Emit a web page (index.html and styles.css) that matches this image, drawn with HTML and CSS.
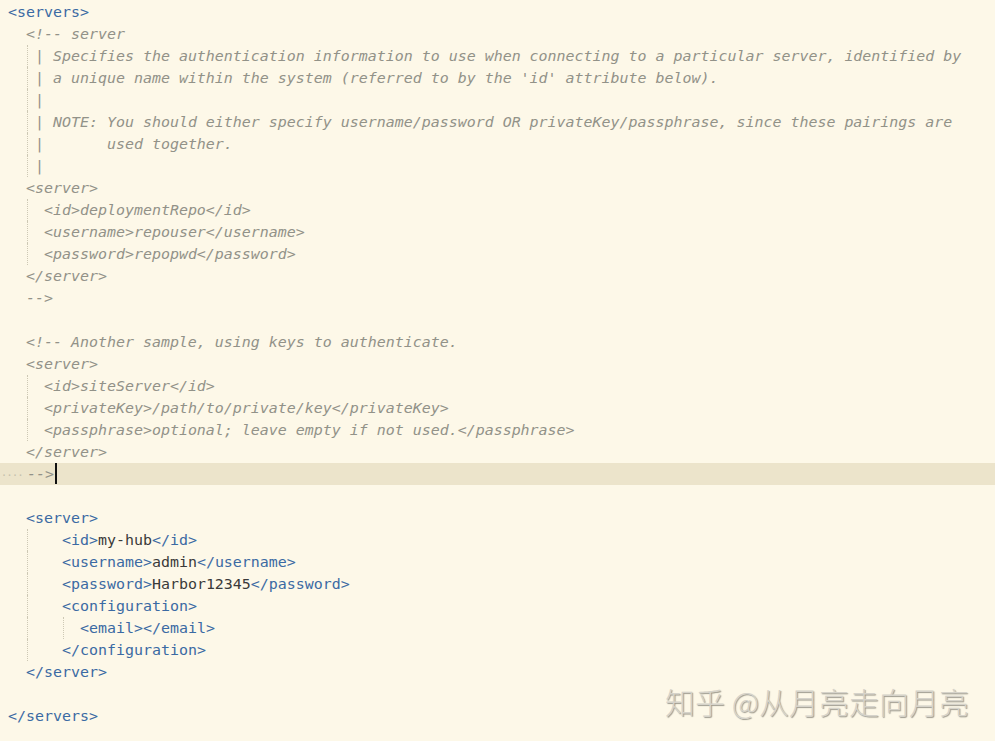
FILE: index.html
```html
<!DOCTYPE html>
<html lang="zh">
<head>
<meta charset="utf-8">
<title>settings.xml</title>
<link rel="stylesheet" href="styles.css">
</head>
<body>
<div class="editor">
<div class="code">
<div class="ln"><span class="t">&lt;servers&gt;</span></div>
<div class="ln c">  &lt;!-- server</div>
<div class="ln c">  <span class="gd"></span> | Specifies the authentication information to use when connecting to a particular server, identified by</div>
<div class="ln c">  <span class="gd"></span> | a unique name within the system (referred to by the 'id' attribute below).</div>
<div class="ln c">  <span class="gd"></span> |</div>
<div class="ln c">  <span class="gd"></span> | NOTE: You should either specify username/password OR privateKey/passphrase, since these pairings are</div>
<div class="ln c">  <span class="gd"></span> |       used together.</div>
<div class="ln c">  <span class="gd"></span> |</div>
<div class="ln c">  &lt;server&gt;</div>
<div class="ln c">  <span class="gd"></span>  &lt;id&gt;deploymentRepo&lt;/id&gt;</div>
<div class="ln c">  <span class="gd"></span>  &lt;username&gt;repouser&lt;/username&gt;</div>
<div class="ln c">  <span class="gd"></span>  &lt;password&gt;repopwd&lt;/password&gt;</div>
<div class="ln c">  &lt;/server&gt;</div>
<div class="ln c">  --&gt;</div>
<div class="ln"></div>
<div class="ln c">  &lt;!-- Another sample, using keys to authenticate.</div>
<div class="ln c">  &lt;server&gt;</div>
<div class="ln c">  <span class="gd"></span>  &lt;id&gt;siteServer&lt;/id&gt;</div>
<div class="ln c">  <span class="gd"></span>  &lt;privateKey&gt;/path/to/private/key&lt;/privateKey&gt;</div>
<div class="ln c">  <span class="gd"></span>  &lt;passphrase&gt;optional; leave empty if not used.&lt;/passphrase&gt;</div>
<div class="ln c">  &lt;/server&gt;</div>
<div class="ln c cur"><span class="ws">····</span>--&gt;<span class="caret"></span></div>
<div class="ln"></div>
<div class="ln">  <span class="t">&lt;server&gt;</span></div>
<div class="ln">  <span class="gd"></span>    <span class="t">&lt;id&gt;</span>my-hub<span class="t">&lt;/id&gt;</span></div>
<div class="ln">  <span class="gd"></span>    <span class="t">&lt;username&gt;</span>admin<span class="t">&lt;/username&gt;</span></div>
<div class="ln">  <span class="gd"></span>    <span class="t">&lt;password&gt;</span>Harbor12345<span class="t">&lt;/password&gt;</span></div>
<div class="ln">  <span class="gd"></span>    <span class="t">&lt;configuration&gt;</span></div>
<div class="ln">  <span class="gd"></span>    <span class="gd"></span>  <span class="t">&lt;email&gt;&lt;/email&gt;</span></div>
<div class="ln">  <span class="gd"></span>    <span class="t">&lt;/configuration&gt;</span></div>
<div class="ln">  <span class="t">&lt;/server&gt;</span></div>
<div class="ln"></div>
<div class="ln"><span class="t">&lt;/servers&gt;</span></div>
</div>
<div class="watermark">知乎 @从月亮走向月亮</div>
</div>
</body>
</html>
```

FILE: styles.css
```css
html, body {
  margin: 0;
  padding: 0;
  background: #fdf8e8;
}
.editor {
  position: relative;
  width: 995px;
  height: 741px;
  overflow: hidden;
  background: #fdf8e8;
}
.code {
  padding-top: 1px;
  font-family: "DejaVu Sans Mono", "Liberation Mono", monospace;
  font-size: 14.95px;
  color: #3a3a3a;
}
.ln {
  height: 22px;
  line-height: 22px;
  padding-left: 8px;
  white-space: pre;
}
.c {
  color: #929288;
  font-style: italic;
}
.t {
  color: #3b6aa3;
}
.gd {
  display: inline-block;
  width: 0;
  height: 22px;
  vertical-align: top;
  border-left: 1px dotted #cdc8b4;
  margin-left: 1px;
  margin-right: -2px;
}
.cur {
  background: #ece4cb;
}
.ws {
  display: inline-block;
  width: 27px;
  margin-left: -8px;
  font-style: normal;
  font-size: 10px;
  letter-spacing: -0.5px;
  color: #c4bfab;
  text-align: left;
  padding-left: 1px;
  box-sizing: border-box;
}
.caret {
  display: inline-block;
  width: 2px;
  height: 21px;
  background: #111;
  vertical-align: top;
  margin-left: 1px;
}
.watermark {
  position: absolute;
  left: 665px;
  top: 681px;
  font-family: "Noto Sans CJK SC", sans-serif;
  font-weight: 300;
  font-size: 30px;
  line-height: 40px;
  color: #d6d3ca;
  text-shadow: 1px 1px 1px rgba(90, 88, 80, 0.6);
  white-space: nowrap;
}
```
